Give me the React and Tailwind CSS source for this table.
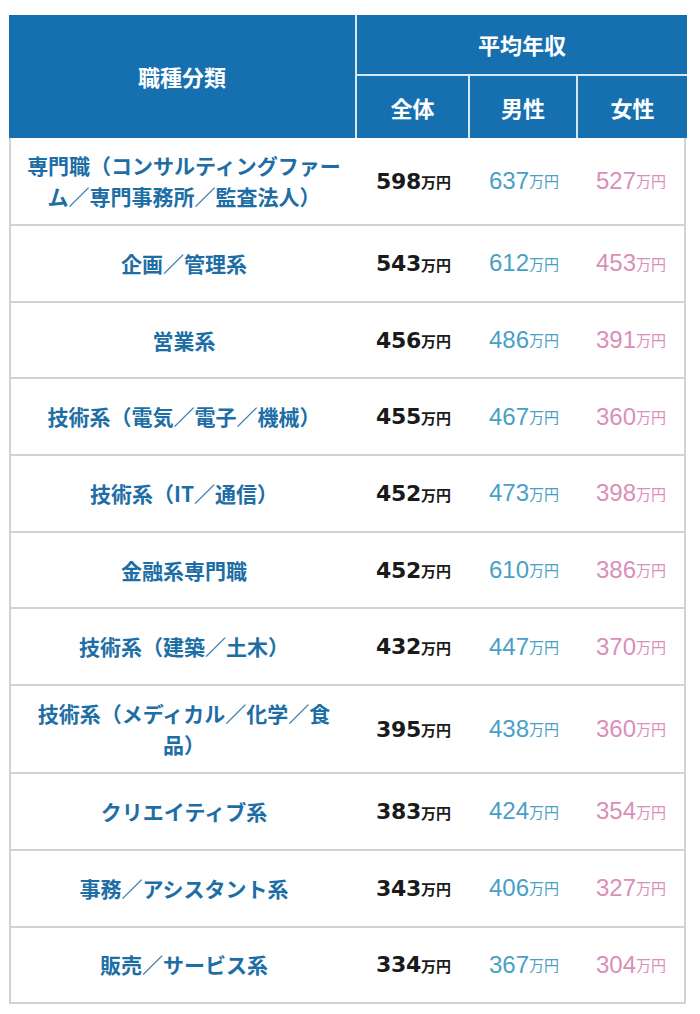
import React from "react";

const rows = [
  ["専門職（コンサルティングファーム／専門事務所／監査法人）", "598", "637", "527"],
  ["企画／管理系", "543", "612", "453"],
  ["営業系", "456", "486", "391"],
  ["技術系（電気／電子／機械）", "455", "467", "360"],
  ["技術系（IT／通信）", "452", "473", "398"],
  ["金融系専門職", "452", "610", "386"],
  ["技術系（建築／土木）", "432", "447", "370"],
  ["技術系（メディカル／化学／食品）", "395", "438", "360"],
  ["クリエイティブ系", "383", "424", "354"],
  ["事務／アシスタント系", "343", "406", "327"],
  ["販売／サービス系", "334", "367", "304"],
];

const jp = { fontFamily: '"Noto Sans CJK JP", sans-serif' };
const boldNum = { fontFamily: '"DejaVu Sans", "Noto Sans CJK JP", sans-serif' };
const num = { fontFamily: '"Liberation Sans", "Noto Sans CJK JP", sans-serif' };

export default function App() {
  return (
    <div className="w-[700px] h-[1014px] bg-white pt-[15px] pl-[9px]" style={jp}>
      <div className="w-[678px]">
        {/* Header */}
        <div className="flex bg-[#1670b0] text-white font-bold h-[123px]">
          <div className="w-[348px] border-r-2 border-[#d6e6f2] flex items-center justify-center text-[22px]">
            職種分類
          </div>
          <div className="flex-1 flex flex-col">
            <div className="h-[61px] border-b-2 border-[#d6e6f2] flex items-center justify-center text-[22px]">
              平均年収
            </div>
            <div className="flex-1 flex text-[22px]">
              <div className="w-[113px] border-r-2 border-[#d6e6f2] flex items-center justify-center">全体</div>
              <div className="w-[108px] border-r-2 border-[#d6e6f2] flex items-center justify-center">男性</div>
              <div className="flex-1 flex items-center justify-center">女性</div>
            </div>
          </div>
        </div>
        {/* Body */}
        <div className="border-x-2 border-[#d2d2d2] w-[677px]">
          {rows.map((r, i) => (
            <div key={i} className="flex border-b-2 border-[#d2d2d2] min-h-[76.7px]">
              <div className="w-[346px] px-3 py-[12px] flex items-center justify-center text-center text-[21px] leading-[31px] font-bold text-[#1e6ea6]">
                {r[0]}
              </div>
              <div className="w-[113px] flex items-center justify-center text-[#1a1a1a]">
                <span className="text-[22px] font-bold tracking-[-0.3px]" style={boldNum}>{r[1]}</span>
                <span className="text-[15px] font-bold mt-[3px]" style={jp}>万円</span>
              </div>
              <div className="w-[108px] flex items-center justify-center text-[#4a9fc6]" style={num}>
                <span className="text-[24px]">{r[2]}</span>
                <span className="text-[15px] mt-[3px]">万円</span>
              </div>
              <div className="flex-1 flex items-center justify-center text-[#d98fba]" style={num}>
                <span className="text-[24px]">{r[3]}</span>
                <span className="text-[15px] mt-[3px]">万円</span>
              </div>
            </div>
          ))}
        </div>
      </div>
    </div>
  );
}
